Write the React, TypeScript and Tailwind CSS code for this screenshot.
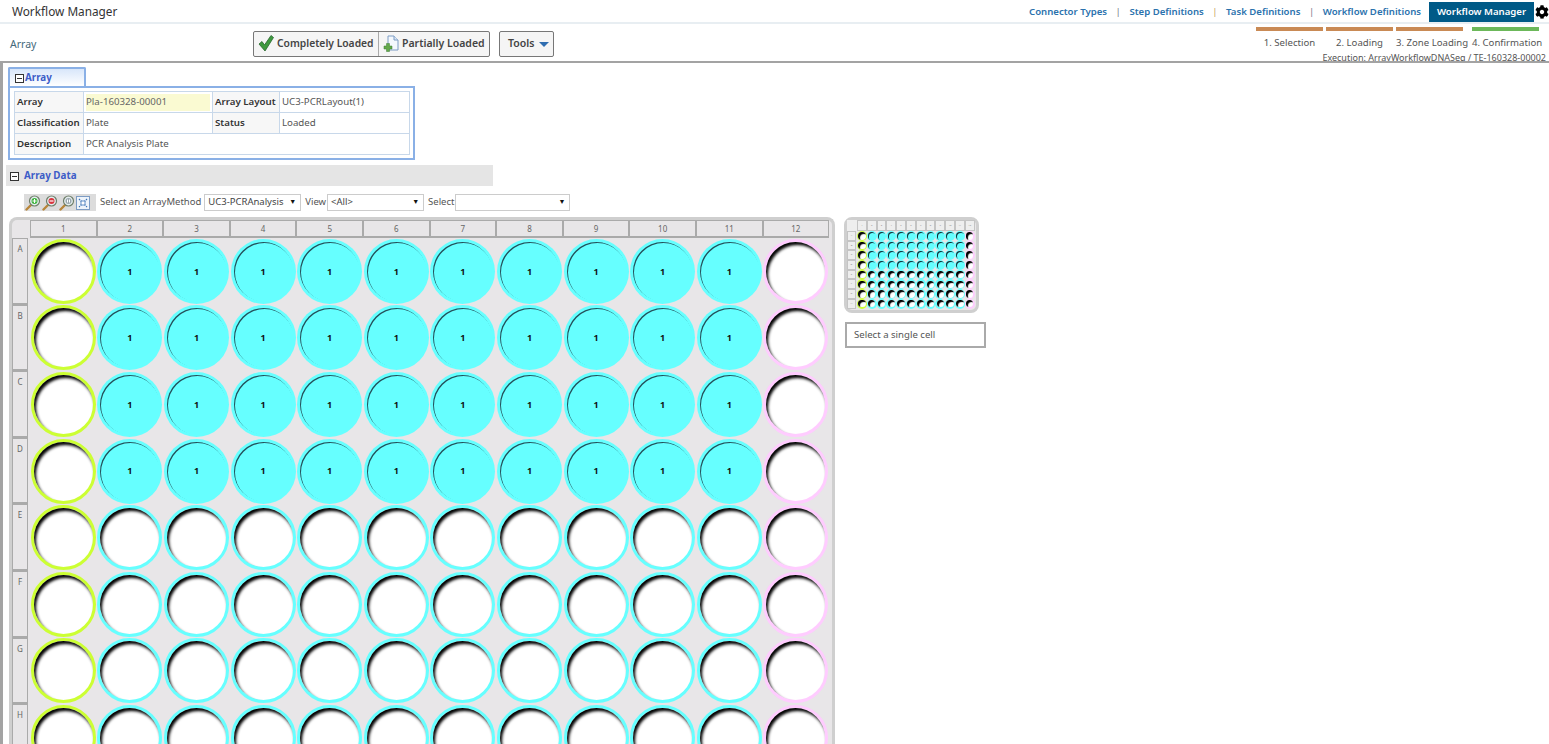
import { FaCog } from 'react-icons/fa'

const COLS = [1, 2, 3, 4, 5, 6, 7, 8, 9, 10, 11, 12]
const ROWS = ['A', 'B', 'C', 'D', 'E', 'F', 'G', 'H']

function ringClass(col: number) {
  if (col === 1) return 'border-[#ccff33]'
  if (col === 12) return 'border-[#ffccff]'
  return 'border-[#66ffff]'
}

function miniBg(col: number) {
  if (col === 1) return 'bg-[#ccff33]'
  if (col === 12) return 'bg-[#ffccff]'
  return 'bg-[#66ffff]'
}

function Well({ row, col }: { row: number; col: number }) {
  const filled = row < 4 && col > 1 && col < 12
  if (filled) {
    return (
      <div className="flex h-[65px] w-[65px] items-center justify-center rounded-full bg-[#66ffff]">
        <div className="flex h-[59px] w-[59px] items-center justify-center rounded-full shadow-[inset_1px_1px_0.5px_#24505a] text-[9px] font-bold text-[#111]">
          1
        </div>
      </div>
    )
  }
  return (
    <div className={`h-[65px] w-[65px] rounded-full border-[3px] ${ringClass(col)} bg-white`}>
      <div className="h-full w-full rounded-full shadow-[inset_2px_3px_3px_#000]" />
    </div>
  )
}

function MiniWell({ row, col }: { row: number; col: number }) {
  const filled = row < 4 && col > 1 && col < 12
  return (
    <div className={`flex h-[9.7px] w-[9.7px] items-center justify-center rounded-full ${miniBg(col)}`}>
      {filled ? (
        <div className="h-[7.5px] w-[7.5px] rounded-full shadow-[inset_1px_1px_0.5px_#123038]" />
      ) : (
        <div className="h-[7.5px] w-[7.5px] rounded-full bg-white shadow-[inset_2px_2px_1px_#000]" />
      )}
    </div>
  )
}

function Plate() {
  return (
    <div className="w-[826px] shrink-0 rounded-t-lg border-[3px] border-b-0 border-[#cfcfcf] bg-[#e8e6e8]">
      <div className="grid grid-cols-[18px_repeat(12,66.6px)] grid-rows-[18px_repeat(8,66.6px)]">
        <div />
        {COLS.map((c) => (
          <div
            key={c}
            className="flex items-center justify-center border border-b-2 border-[#aaa] text-[8px] text-[#666]"
          >
            {c}
          </div>
        ))}
        {ROWS.map((r, i) => [
          <div key={r} className="mr-[2px] border border-b-2 border-[#aaa] pt-[4px] text-center text-[8px] text-[#666]">
            {r}
          </div>,
          ...COLS.map((c) => (
            <div key={r + c} className="flex items-center justify-center">
              <Well row={i} col={c} />
            </div>
          )),
        ])}
      </div>
    </div>
  )
}

function MiniPlate() {
  return (
    <div className="h-[96px] w-[135px] rounded-lg border-[3px] border-[#cfcfcf] bg-[#e8e6e8]">
      <div className="grid grid-cols-[10px_repeat(12,9.8px)] grid-rows-[11px_repeat(8,9.7px)]">
        <div className="bg-[#eee]" />
        {COLS.map((c) => (
          <div key={c} className="flex items-center justify-center border border-[#c4c4c4] bg-[#eee] text-[2.5px] text-[#888]">
            {c}
          </div>
        ))}
        {ROWS.map((r, i) => [
          <div key={r} className="mr-[1px] flex items-center justify-center border border-[#c4c4c4] bg-[#eee] text-[2.5px] text-[#888]">
            {r}
          </div>,
          ...COLS.map((c) => (
            <div key={r + c} className="flex items-center justify-center">
              <MiniWell row={i} col={c} />
            </div>
          )),
        ])}
      </div>
    </div>
  )
}

function Collapse() {
  return (
    <span className="flex h-[9px] w-[9px] shrink-0 items-center justify-center border border-[#333] bg-white">
      <span className="h-px w-[5px] bg-[#333]" />
    </span>
  )
}

function Magnifier({ kind }: { kind: 'plus' | 'minus' | 'reset' }) {
  const fill = kind === 'plus' ? '#3fb53f' : kind === 'minus' ? '#d9363e' : '#9aa7ae'
  return (
    <svg width="16" height="16" viewBox="0 0 16 16">
      <path d="M6 10 L1.5 14.5" stroke="#b8863b" strokeWidth="2.4" strokeLinecap="round" />
      <circle cx="9.5" cy="6" r="5" fill="#e6eef0" stroke="#6f7f6a" strokeWidth="1.2" />
      <circle cx="9.5" cy="6" r="3" fill={fill} />
      {kind === 'plus' && <path d="M7.5 6h4M9.5 4v4" stroke="#fff" strokeWidth="1" />}
      {kind === 'minus' && <path d="M7.5 6h4" stroke="#fff" strokeWidth="1.2" />}
      {kind === 'reset' && <path d="M8.5 4.5v3M10.5 4.5v3" stroke="#fff" strokeWidth="1" />}
    </svg>
  )
}

function FitIcon() {
  return (
    <svg width="14" height="14" viewBox="0 0 14 14">
      <rect x="0.5" y="0.5" width="13" height="13" fill="#eef4fb" stroke="#7d9cc4" />
      <path d="M3 3l8 8M11 3l-8 8" stroke="#3c74b8" strokeWidth="1.2" strokeDasharray="1.5 1" />
      <rect x="5" y="5" width="4" height="4" fill="#fff" stroke="#3c74b8" strokeWidth="0.8" />
    </svg>
  )
}

function Select({ value, width }: { value: string; width: string }) {
  return (
    <div className={`flex h-[17px] ${width} items-center justify-between border border-[#ccc] bg-white pl-[3px] pr-[4px] text-[9.5px] text-[#444]`}>
      <span>{value}</span>
      <span className="text-[7px] text-[#111]">▼</span>
    </div>
  )
}

function Step({ label, color, align }: { label: string; color: string; align: string }) {
  return (
    <div className="w-[67px]">
      <div className={`h-[4px] ${color}`} />
      <div className={`mt-[5px] flex whitespace-nowrap text-[9.6px] text-[#555] ${align}`}>{label}</div>
    </div>
  )
}

export default function App() {
  return (
    <div className="h-screen overflow-hidden bg-white font-['Open_Sans',sans-serif]">
      <header className="flex h-[24px] items-center justify-between border-b-2 border-[#e8eef2] pl-[12px] pt-[2px]">
        <div className="text-[11.8px] text-[#333]">Workflow Manager</div>
        <nav className="flex items-center text-[9.6px] font-semibold text-[#2b72ad]">
          <a>Connector Types</a>
          <span className="mx-[8.5px] font-normal text-[#778]">|</span>
          <a>Step Definitions</a>
          <span className="mx-[8.5px] font-normal text-[#c8a060]">|</span>
          <a>Task Definitions</a>
          <span className="mx-[8.5px] font-normal text-[#778]">|</span>
          <a>Workflow Definitions</a>
          <span className="ml-[8px] flex h-[20px] w-[105px] items-center justify-center bg-[#005a87] text-white">
            Workflow Manager
          </span>
          <FaCog className="ml-[1px] h-[14px] w-[14px] text-black" />
        </nav>
      </header>

      <div className="flex h-[37px] justify-between pl-[10px] pr-[3px]">
        <div className="flex items-center pt-[2px]">
          <div className="w-[243px] pt-[2px] text-[10.5px] text-[#44697a]">Array</div>
          <div className="flex h-[26px] w-[237px] rounded-[2px] border border-[#777] bg-[#f5f5f5] text-[10.3px] font-semibold text-[#444]">
            <button className="flex w-[125px] items-center gap-[3px] border-r border-[#aaa] pl-[4px]">
              <svg width="16" height="17" viewBox="0 0 16 17">
                <path d="M1 9 L4 6.500 L6.500 10 L13 0.500 L15.500 2.500 L7 16 Z" fill="#3f9a3f" stroke="#27662c" strokeWidth="0.8" />
              </svg>
              Completely Loaded
            </button>
            <button className="flex flex-1 items-center gap-[3px] pl-[4px]">
              <svg width="16" height="18" viewBox="0 0 16 18">
                <path d="M5 1h6l4 4v10H5z" fill="#f4f8fd" stroke="#7d9cc4" />
                <path d="M11 1v4h4" fill="#dbe7f5" stroke="#7d9cc4" />
                <path d="M3.500 8.500h3v2.500H9v3H6.500v2.500h-3V14H1v-3h2.500z" fill="#63a84a" stroke="#3f7d34" strokeWidth="0.5" />
              </svg>
              <span className="text-[10.5px]">Partially Loaded</span>
            </button>
          </div>
          <button className="ml-[9px] flex h-[26px] w-[55px] items-center gap-[5px] rounded-[2px] border border-[#777] bg-[#f5f5f5] pl-[8px] text-[10.5px] font-semibold text-[#444]">
            Tools
            <span className="mt-[2px] h-0 w-0 border-x-[5.5px] border-t-[5px] border-x-transparent border-t-[#2f6db0]" />
          </button>
        </div>
        <div className="h-[37px] overflow-hidden">
          <div className="flex w-[290px] gap-[3px] pt-[3px]">
            <Step label="1. Selection" color="bg-[#c98a55]" align="justify-center" />
            <Step label="2. Loading" color="bg-[#c98a55]" align="justify-center" />
            <Step label="3. Zone Loading" color="bg-[#c98a55]" align="justify-start" />
            <div className="ml-[6px]">
              <Step label="4. Confirmation" color="bg-[#6cb85a]" align="justify-start" />
            </div>
          </div>
          <div className="mt-[1px] text-right text-[9px] text-[#555]">
            Execution: ArrayWorkflowDNASeq / TE-160328-00002
          </div>
        </div>
      </div>

      <main className="h-full border-l-[3px] border-t-2 border-[#a3a3a3] pl-[3px] pt-[4px]">
        <div className="ml-[2px] flex h-[19px] w-[78px] items-center gap-[1px] rounded-t-[2px] border-2 border-b-0 border-[#8ab0e6] bg-gradient-to-b from-[#d8e6fa] to-white pl-[5px] pt-px text-[9.8px] font-bold text-[#3c5cc8]">
          <Collapse />
          Array
        </div>
        <div className="ml-[2px] w-[407px] border-2 border-[#8ab0e6] p-[3px] pl-[4px] text-[9.7px]">
          <table className="w-[395px] table-fixed border-collapse border border-[#c8d8ea] text-[#555]">
            <colgroup>
              <col className="w-[69px]" />
              <col className="w-[129px]" />
              <col className="w-[67px]" />
              <col className="w-[130px]" />
            </colgroup>
            <tbody>
              <tr className="h-[21px]">
                <td className="border border-[#c8d8ea] bg-[#f7f7f7] pl-[2px] font-semibold text-[#333]">Array</td>
                <td className="border border-[#c8d8ea] px-[2px]">
                  <div className="flex h-[17px] items-center bg-[#fafad2] text-[#666]">Pla-160328-00001</div>
                </td>
                <td className="border border-[#c8d8ea] bg-[#f7f7f7] pl-[2px] font-semibold whitespace-nowrap text-[#333]">Array Layout</td>
                <td className="border border-[#c8d8ea] pl-[2px]">UC3-PCRLayout(1)</td>
              </tr>
              <tr className="h-[21px]">
                <td className="border border-[#c8d8ea] bg-[#f7f7f7] pl-[2px] font-semibold whitespace-nowrap text-[#333]">Classification</td>
                <td className="border border-[#c8d8ea] pl-[2px]">Plate</td>
                <td className="border border-[#c8d8ea] bg-[#f7f7f7] pl-[2px] font-semibold text-[#333]">Status</td>
                <td className="border border-[#c8d8ea] pl-[2px]">Loaded</td>
              </tr>
              <tr className="h-[21px]">
                <td className="border border-[#c8d8ea] bg-[#f7f7f7] pl-[2px] font-semibold text-[#333]">Description</td>
                <td className="border border-[#c8d8ea] pl-[2px]" colSpan={3}>PCR Analysis Plate</td>
              </tr>
            </tbody>
          </table>
        </div>

        <div className="mt-[5px] flex h-[21px] w-[487px] items-center gap-[5px] bg-[#e5e5e5] pl-[4px] pt-px text-[9.8px] font-bold text-[#3c5cc8]">
          <Collapse />
          Array Data
        </div>

        <div className="ml-[18px] mt-[8px] flex h-[17px] items-center text-[9.5px] text-[#555]">
          <div className="mr-[4px] flex h-[17px] w-[72px] items-center gap-[1px] bg-[#dcdcdc] pl-px">
            <Magnifier kind="plus" />
            <Magnifier kind="minus" />
            <Magnifier kind="reset" />
            <FitIcon />
          </div>
          <span className="mr-[3px] whitespace-nowrap">Select an ArrayMethod</span>
          <Select value="UC3-PCRAnalysis" width="w-[97px]" />
          <span className="ml-[4px] mr-px">View</span>
          <Select value="<All>" width="w-[97px]" />
          <span className="ml-[4px] mr-px">Select</span>
          <Select value="" width="w-[115px]" />
        </div>

        <div className="ml-[3px] mt-[6px] flex items-start gap-[9px]">
          <Plate />
          <div>
            <MiniPlate />
            <div className="mt-[9px] ml-px flex h-[26px] w-[141px] items-center border-2 border-[#aaa] pl-[7px] text-[9.6px] text-[#555]">
              Select a single cell
            </div>
          </div>
        </div>
      </main>
    </div>
  )
}
